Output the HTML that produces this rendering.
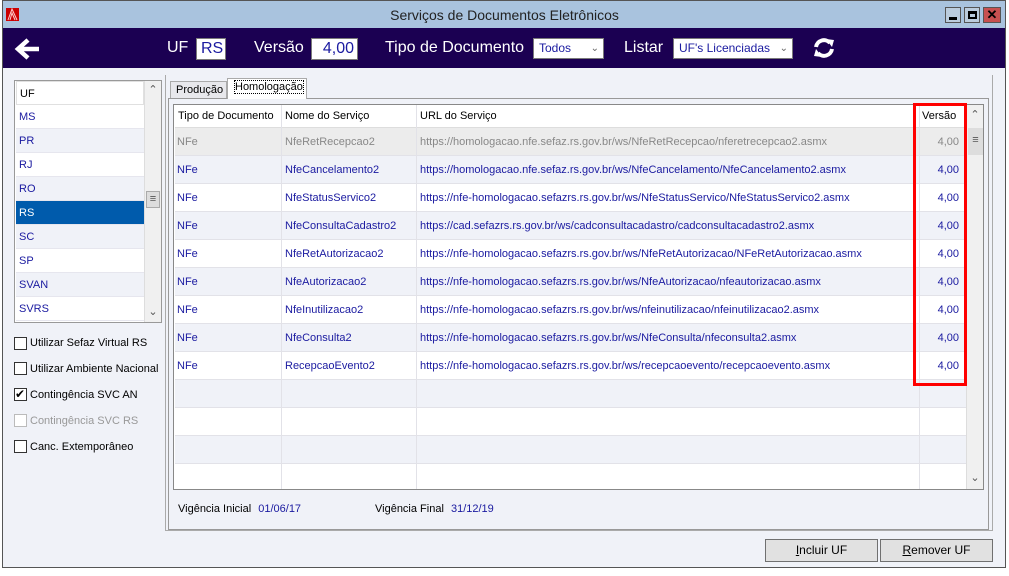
<!DOCTYPE html>
<html><head><meta charset="utf-8"><style>
*{margin:0;padding:0;box-sizing:border-box}
body{width:1009px;height:576px;position:relative;overflow:hidden;background:#fff;font-family:"Liberation Sans",sans-serif;font-size:11px;color:#000}
.a{position:absolute}
.win{left:2px;top:0;width:1004px;height:568px;background:#f0f2f8;border:1px solid #555}
.title{left:3px;top:1px;width:1002px;height:27px;background:#a9c3de}
.tb{left:3px;top:28px;width:1002px;height:40px;background:#1b0052;color:#fff;font-size:16px}
.inp{background:#fff;border:1px solid #7a7a7a;color:#1a1aa0}
.list{left:14px;top:80px;width:148px;height:243px;border:1px solid #999;background:#fff}
.li{position:absolute;left:1px;width:128px;height:24px;line-height:24px;padding-left:3px;color:#1a1aa0;border-bottom:1px solid #e6e6ee}
.cb{position:absolute;left:14px;width:13px;height:13px;border:1px solid #333;background:#fff}
.cbt{position:absolute;left:30px}
.grid{left:173px;top:104px;width:811px;height:386px;border:1px solid #888;background:#fff}
.row{position:absolute;left:1px;width:791px;height:28px;border-bottom:1px solid #e2e2e8;color:#1a1aa0}
.row span{position:absolute;top:8px}
.vl{position:absolute;top:0;width:1px;background:#e2e2e8}
.btn{top:539px;height:23px;background:#e1e1e1;border:1px solid #707070;text-align:center;line-height:21px;font-size:12px}
</style></head><body>
<div class="a win"></div>
<div class="a title"></div>
<svg class="a" style="left:6px;top:8px" width="13" height="13"><rect width="13" height="13" fill="#c00"/><path d="M2 12L6 1L11 12M4 12L6 5L9 12" stroke="#fcc" fill="none"/></svg>
<div class="a" style="left:0;top:7px;width:1009px;text-align:center;font-size:14px;color:#222">Serviços de Documentos Eletrônicos</div>
<div class="a" style="left:945px;top:7px;width:16px;height:16px;border:1px solid #555;background:#bcd"><div class="a" style="left:3px;top:9px;width:8px;height:3px;background:#000"></div></div>
<div class="a" style="left:964px;top:7px;width:16px;height:16px;border:1px solid #555;background:#bcd"><div class="a" style="left:3px;top:3px;width:9px;height:8px;border:2px solid #000;border-top-width:3px"></div></div>
<div class="a" style="left:983px;top:7px;width:18px;height:16px;border:1px solid #555;background:#c75050;color:#000;font-weight:bold;text-align:center;line-height:14px;font-size:13px">✕</div>
<div class="a tb">
<svg class="a" style="left:11px;top:10px" width="26" height="22"><path d="M25 11H6M14 2L4 11L14 20" stroke="#fff" stroke-width="4.5" fill="none"/></svg>
<div class="a" style="left:164px;top:11px">UF</div>
<div class="a inp" style="left:193px;top:10px;width:30px;height:22px;padding-left:4px;line-height:20px">RS</div>
<div class="a" style="left:251px;top:11px">Versão</div>
<div class="a inp" style="left:308px;top:10px;width:47px;height:22px;text-align:right;padding-right:3px;line-height:20px">4,00</div>
<div class="a" style="left:382px;top:11px">Tipo de Documento</div>
<div class="a inp" style="left:530px;top:10px;width:71px;height:21px;font-size:12px;line-height:19px;padding-left:5px">Todos<span style="position:absolute;right:4px;color:#666;font-size:10px">⌄</span></div>
<div class="a" style="left:621px;top:11px">Listar</div>
<div class="a inp" style="left:670px;top:10px;width:120px;height:21px;font-size:12px;line-height:19px;padding-left:5px">UF's Licenciadas<span style="position:absolute;right:4px;color:#666;font-size:10px">⌄</span></div>
<svg class="a" style="left:809px;top:9px" width="24" height="22"><path d="M4 10A8 8 0 0 1 18 6M20 12A8 8 0 0 1 6 16" stroke="#fff" stroke-width="4" fill="none"/><path d="M14 2L22 3L20 10Z M10 20L2 19L4 12Z" fill="#fff"/></svg>
</div>
<div class="a list">
<div class="li" style="top:0;color:#000;border:1px solid #e0e0e0">UF</div>
<div class="li" style="top:24px">MS</div>
<div class="li" style="top:48px;background:#f0f2f8">PR</div>
<div class="li" style="top:72px">RJ</div>
<div class="li" style="top:96px;background:#f0f2f8">RO</div>
<div class="li" style="top:120px;background:#005bac;color:#fff">RS</div>
<div class="li" style="top:144px;background:#f0f2f8">SC</div>
<div class="li" style="top:168px">SP</div>
<div class="li" style="top:192px;background:#f0f2f8">SVAN</div>
<div class="li" style="top:216px">SVRS</div>
<div class="a" style="left:129px;top:0;width:17px;height:241px;background:#f0f0f0;border-left:1px solid #ddd;color:#555;text-align:center"><div style="position:absolute;top:2px;width:16px">⌃</div><div style="position:absolute;top:110px;left:1px;width:14px;height:17px;background:#ddd;border:1px solid #aaa;line-height:14px">≡</div><div style="position:absolute;top:224px;width:16px">⌄</div></div>
</div>
<div class="cb" style="top:337px"></div><div class="cbt a" style="top:337px">Utilizar Sefaz Virtual RS</div>
<div class="cb" style="top:362px"></div><div class="cbt a" style="top:363px">Utilizar Ambiente Nacional</div>
<div class="cb" style="top:388px;line-height:11px;font-size:12px">✔</div><div class="cbt a" style="top:389px">Contingência SVC AN</div>
<div class="cb" style="top:414px;border-color:#bbb"></div><div class="cbt a" style="top:415px;color:#999">Contingência SVC RS</div>
<div class="cb" style="top:440px"></div><div class="cbt a" style="top:441px">Canc. Extemporâneo</div>
<div class="a" style="left:165px;top:75px;width:828px;height:456px;border:1px solid #aaa;border-top:none;background:#f0f2f8"></div>
<div class="a" style="left:168px;top:98px;width:821px;height:432px;border:1px solid #999;background:#f0f2f8"></div>
<div class="a" style="left:170px;top:81px;width:57px;height:17px;border:1px solid #aaa;border-bottom:none;background:#e8e8ec;padding:2px 0 0 5px">Produção</div>
<div class="a" style="left:227px;top:78px;width:80px;height:21px;border:1px solid #aaa;border-bottom:none;background:#fff;padding:2px 0 0 7px"><span style="outline:1px dotted #000">Homologação</span></div>
<div class="a grid">
<div class="row" style="top:0;height:23px;color:#000;border-bottom:1px solid #ddd"><span style="left:3px;top:5px">Tipo de Documento</span><span style="left:110px;top:5px">Nome do Serviço</span><span style="left:245px;top:5px">URL do Serviço</span><span style="left:747px;top:5px">Versão</span></div>
<div class="row" style="top:23px;background:#ececec;color:#888"><span style="left:2px">NFe</span><span style="left:110px">NfeRetRecepcao2</span><span style="left:245px">https://homologacao.nfe.sefaz.rs.gov.br/ws/NfeRetRecepcao/nferetrecepcao2.asmx</span><span style="right:7px">4,00</span></div>
<div class="row" style="top:51px;background:#f0f2f8"><span style="left:2px">NFe</span><span style="left:110px">NfeCancelamento2</span><span style="left:245px">https://homologacao.nfe.sefaz.rs.gov.br/ws/NfeCancelamento/NfeCancelamento2.asmx</span><span style="right:7px">4,00</span></div>
<div class="row" style="top:79px"><span style="left:2px">NFe</span><span style="left:110px">NfeStatusServico2</span><span style="left:245px">https://nfe-homologacao.sefazrs.rs.gov.br/ws/NfeStatusServico/NfeStatusServico2.asmx</span><span style="right:7px">4,00</span></div>
<div class="row" style="top:107px;background:#f0f2f8"><span style="left:2px">NFe</span><span style="left:110px">NfeConsultaCadastro2</span><span style="left:245px">https://cad.sefazrs.rs.gov.br/ws/cadconsultacadastro/cadconsultacadastro2.asmx</span><span style="right:7px">4,00</span></div>
<div class="row" style="top:135px"><span style="left:2px">NFe</span><span style="left:110px">NfeRetAutorizacao2</span><span style="left:245px">https://nfe-homologacao.sefazrs.rs.gov.br/ws/NfeRetAutorizacao/NFeRetAutorizacao.asmx</span><span style="right:7px">4,00</span></div>
<div class="row" style="top:163px;background:#f0f2f8"><span style="left:2px">NFe</span><span style="left:110px">NfeAutorizacao2</span><span style="left:245px">https://nfe-homologacao.sefazrs.rs.gov.br/ws/NfeAutorizacao/nfeautorizacao.asmx</span><span style="right:7px">4,00</span></div>
<div class="row" style="top:191px"><span style="left:2px">NFe</span><span style="left:110px">NfeInutilizacao2</span><span style="left:245px">https://nfe-homologacao.sefazrs.rs.gov.br/ws/nfeinutilizacao/nfeinutilizacao2.asmx</span><span style="right:7px">4,00</span></div>
<div class="row" style="top:219px;background:#f0f2f8"><span style="left:2px">NFe</span><span style="left:110px">NfeConsulta2</span><span style="left:245px">https://nfe-homologacao.sefazrs.rs.gov.br/ws/NfeConsulta/nfeconsulta2.asmx</span><span style="right:7px">4,00</span></div>
<div class="row" style="top:247px"><span style="left:2px">NFe</span><span style="left:110px">RecepcaoEvento2</span><span style="left:245px">https://nfe-homologacao.sefazrs.rs.gov.br/ws/recepcaoevento/recepcaoevento.asmx</span><span style="right:7px">4,00</span></div>
<div class="row" style="top:275px;background:#f0f2f8"></div>
<div class="row" style="top:303px"></div>
<div class="row" style="top:331px;background:#f0f2f8"></div>
<div class="row" style="top:359px;height:25px;border:none"></div>
<div class="vl" style="left:107px;height:384px"></div>
<div class="vl" style="left:242px;height:384px"></div>
<div class="vl" style="left:745px;height:384px"></div>
<div class="a" style="left:792px;top:0;width:17px;height:384px;background:#f0f0f0;border-left:1px solid #ddd;color:#555;text-align:center"><div style="position:absolute;top:3px;width:16px">⌃</div><div style="position:absolute;top:23px;left:1px;width:15px;height:27px;background:#ddd;line-height:25px">≡</div><div style="position:absolute;top:366px;width:16px">⌄</div></div>
</div>
<div class="a" style="left:913px;top:103px;width:54px;height:283px;border:3px solid #f00"></div>
<div class="a" style="left:178px;top:503px">Vigência Inicial <span style="color:#1a1aa0;margin-left:4px">01/06/17</span></div>
<div class="a" style="left:375px;top:503px">Vigência Final <span style="color:#1a1aa0;margin-left:4px">31/12/19</span></div>
<div class="a btn" style="left:765px;width:113px"><u>I</u>ncluir UF</div>
<div class="a btn" style="left:880px;width:113px"><u>R</u>emover UF</div>
</body></html>
